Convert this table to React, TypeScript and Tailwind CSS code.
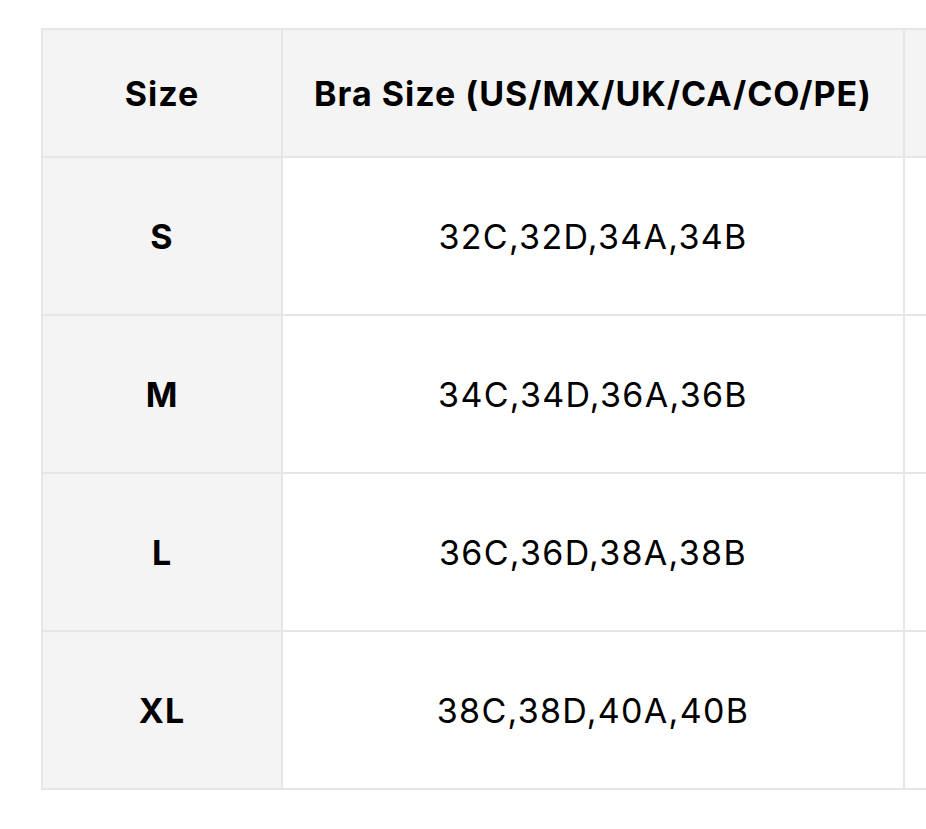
export default function App() {
  const rows = [
    { size: 'S', bra: '32C,32D,34A,34B' },
    { size: 'M', bra: '34C,34D,36A,36B' },
    { size: 'L', bra: '36C,36D,38A,38B' },
    { size: 'XL', bra: '38C,38D,40A,40B' },
  ];

  return (
    <div
      className="w-[926px] h-[829px] bg-white overflow-hidden pl-[41px] pt-[28px]"
      style={{ fontFamily: 'Inter, "Noto Sans", sans-serif' }}
    >
      <table className="border-collapse table-fixed w-[1200px] text-black">
        <colgroup>
          <col className="w-[240px]" />
          <col className="w-[622px]" />
          <col className="w-[338px]" />
        </colgroup>
        <thead>
          <tr className="h-[128px]">
            <th className="border-2 border-[#e6e6e6] bg-[#f4f4f4] text-[34px] font-bold text-center tracking-[1px]">Size</th>
            <th className="border-2 border-[#e6e6e6] bg-[#f4f4f4] text-[34px] font-bold text-center tracking-[1px] whitespace-nowrap">
              Bra Size (US/MX/UK/CA/CO/PE)
            </th>
            <th className="border-2 border-[#e6e6e6] bg-[#f4f4f4]"></th>
          </tr>
        </thead>
        <tbody>
          {rows.map((r) => (
            <tr key={r.size} className="h-[158px]">
              <td className="border-2 border-[#e6e6e6] bg-[#f4f4f4] text-[34px] font-bold text-center tracking-[1px]">{r.size}</td>
              <td className="border-2 border-[#e6e6e6] text-[34px] text-center tracking-[1.3px]">{r.bra}</td>
              <td className="border-2 border-[#e6e6e6]"></td>
            </tr>
          ))}
        </tbody>
      </table>
    </div>
  );
}
